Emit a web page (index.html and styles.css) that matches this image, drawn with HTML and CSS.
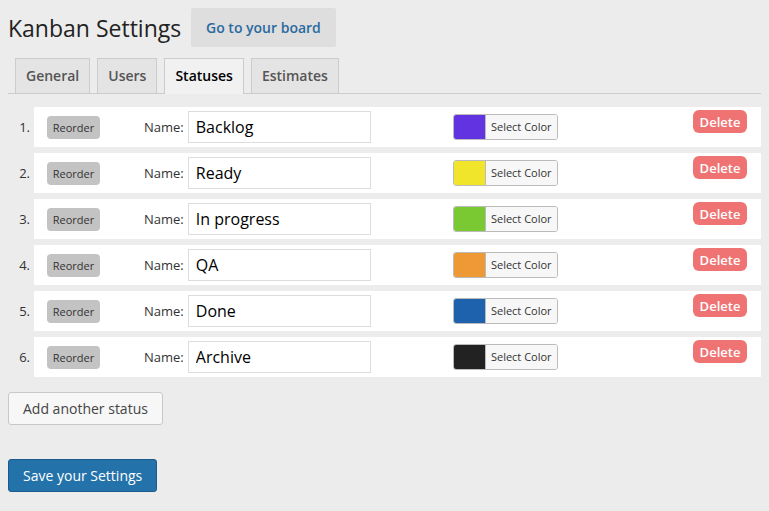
FILE: index.html
```html
<!DOCTYPE html>
<html lang="en">
<head>
    <meta charset="UTF-8">
    <meta name="viewport" content="width=device-width, initial-scale=1.0">
    <title>Kanban Settings</title>
    <link rel="stylesheet" href="styles.css">
</head>
<body>
    <div class="wrap">
        <div class="header">
            <h1 class="title">Kanban Settings</h1>
            <a class="board-btn" href="#">Go to your board</a>
        </div>
        <div class="tabs">
            <a class="tab" href="#">General</a>
            <a class="tab" href="#">Users</a>
            <a class="tab active" href="#">Statuses</a>
            <a class="tab" href="#">Estimates</a>
        </div>
        <div class="statuses">
            <div class="status">
                <span class="num">1.</span>
                <div class="card">
                    <button class="reorder">Reorder</button>
                    <label class="name-label">Name:</label>
                    <input class="name-input" type="text" value="Backlog">
                    <div class="picker"><span class="swatch" style="background:#6233e0"></span><span class="pick-btn">Select Color</span></div>
                    <button class="delete">Delete</button>
                </div>
            </div>
            <div class="status">
                <span class="num">2.</span>
                <div class="card">
                    <button class="reorder">Reorder</button>
                    <label class="name-label">Name:</label>
                    <input class="name-input" type="text" value="Ready">
                    <div class="picker"><span class="swatch" style="background:#f0e52a"></span><span class="pick-btn">Select Color</span></div>
                    <button class="delete">Delete</button>
                </div>
            </div>
            <div class="status">
                <span class="num">3.</span>
                <div class="card">
                    <button class="reorder">Reorder</button>
                    <label class="name-label">Name:</label>
                    <input class="name-input" type="text" value="In progress">
                    <div class="picker"><span class="swatch" style="background:#7ac932"></span><span class="pick-btn">Select Color</span></div>
                    <button class="delete">Delete</button>
                </div>
            </div>
            <div class="status">
                <span class="num">4.</span>
                <div class="card">
                    <button class="reorder">Reorder</button>
                    <label class="name-label">Name:</label>
                    <input class="name-input" type="text" value="QA">
                    <div class="picker"><span class="swatch" style="background:#ee9836"></span><span class="pick-btn">Select Color</span></div>
                    <button class="delete">Delete</button>
                </div>
            </div>
            <div class="status">
                <span class="num">5.</span>
                <div class="card">
                    <button class="reorder">Reorder</button>
                    <label class="name-label">Name:</label>
                    <input class="name-input" type="text" value="Done">
                    <div class="picker"><span class="swatch" style="background:#1e62ae"></span><span class="pick-btn">Select Color</span></div>
                    <button class="delete">Delete</button>
                </div>
            </div>
            <div class="status">
                <span class="num">6.</span>
                <div class="card">
                    <button class="reorder">Reorder</button>
                    <label class="name-label">Name:</label>
                    <input class="name-input" type="text" value="Archive">
                    <div class="picker"><span class="swatch" style="background:#222222"></span><span class="pick-btn">Select Color</span></div>
                    <button class="delete">Delete</button>
                </div>
            </div>
        </div>
        <button class="add-btn">Add another status</button>
        <button class="save-btn">Save your Settings</button>
    </div>
</body>
</html>
```

FILE: styles.css
```css
body{
    margin: 0;
    background-color: #ececec;
    font-family: "Open Sans", "Liberation Sans", sans-serif;
    color: #333;
}
.wrap{
    width: 753px;
    padding: 8px;
}
.header{
    display: flex;
    align-items: center;
}
.title{
    margin: 0;
    font-size: 23px;
    font-weight: 400;
    color: #222;
    width: 183px;
}
.board-btn{
    display: block;
    height: 39px;
    line-height: 39px;
    padding: 0 15px;
    background-color: #dedede;
    border-radius: 2px;
    color: #2a6aa0;
    font-size: 14px;
    font-weight: 600;
    text-decoration: none;
}
.tabs{
    display: flex;
    gap: 7px;
    margin-top: 11px;
    padding-left: 7px;
    border-bottom: 1px solid #ccc;
    height: 35px;
}
.tab{
    display: block;
    height: 34px;
    line-height: 34px;
    padding: 0 10px;
    background-color: #e4e4e4;
    border: 1px solid #ccc;
    border-bottom: none;
    color: #555;
    font-size: 14px;
    font-weight: 600;
    text-decoration: none;
}
.tab.active{
    background-color: #f1f1f1;
    color: #000;
    height: 35px;
}
.statuses{
    margin-top: 13px;
}
.status{
    display: flex;
    align-items: center;
    margin-bottom: 6px;
}
.num{
    width: 22px;
    padding-right: 4px;
    text-align: right;
    font-size: 13px;
    color: #333;
}
.card{
    flex: 1;
    height: 40px;
    background-color: #fff;
    display: flex;
    align-items: center;
    padding-left: 13px;
}
.reorder{
    width: 53px;
    height: 23px;
    padding: 0;
    border: none;
    border-radius: 4px;
    background-color: #c3c3c3;
    font-family: inherit;
    font-size: 11px;
    color: #333;
}
.name-label{
    margin-left: 44px;
    font-size: 13px;
    color: #333;
}
.name-input{
    box-sizing: border-box;
    width: 183px;
    height: 32px;
    margin-left: 4px;
    padding: 0 7px;
    border: 1px solid #ddd;
    font-family: inherit;
    font-size: 16px;
    color: #000;
}
.picker{
    display: flex;
    margin-left: 82px;
    height: 24px;
    border: 1px solid #bbb;
    border-radius: 3px;
    overflow: hidden;
}
.swatch{
    width: 31px;
    border-right: 1px solid #bbb;
}
.pick-btn{
    width: 71px;
    line-height: 24px;
    text-align: center;
    background-color: #f7f7f7;
    font-size: 11px;
    color: #333;
}
.delete{
    align-self: flex-start;
    margin: 3px 14px 0 auto;
    width: 54px;
    height: 23px;
    padding: 0;
    border: none;
    border-radius: 6px;
    background-color: #ef7373;
    color: #fff;
    font-family: inherit;
    font-size: 13px;
    font-weight: 600;
}
.add-btn{
    display: block;
    margin-top: 15px;
    height: 33px;
    padding: 0 14px;
    border: 1px solid #c8c8c8;
    border-radius: 3px;
    background-color: #f7f7f7;
    font-family: inherit;
    font-size: 14px;
    color: #444;
}
.save-btn{
    display: block;
    margin-top: 34px;
    height: 33px;
    padding: 0 14px;
    border: 1px solid #1c5a8c;
    border-radius: 3px;
    background-color: #2372a9;
    font-family: inherit;
    font-size: 14px;
    color: #fff;
}
```
